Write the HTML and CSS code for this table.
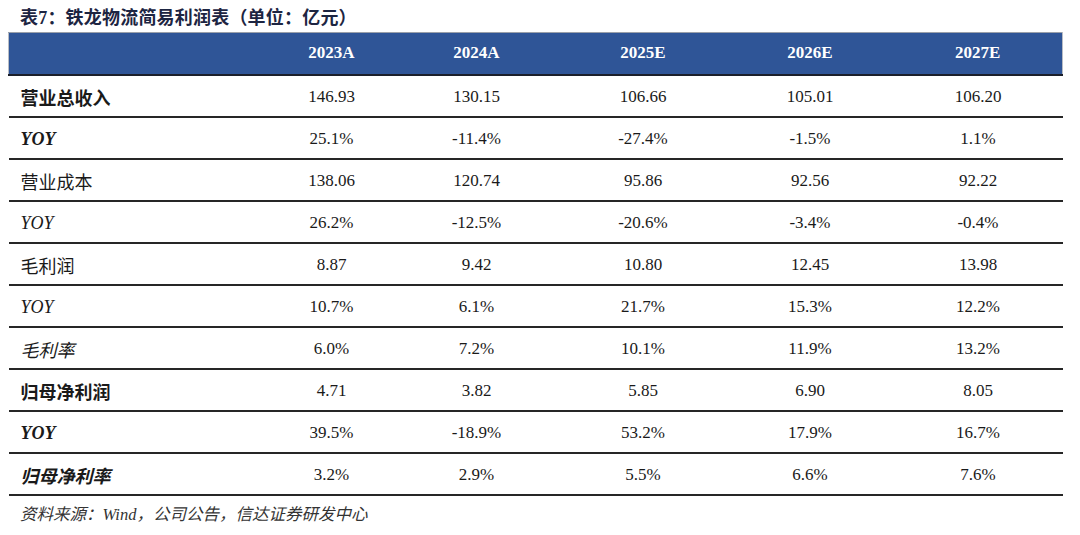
FILE: index.html
```html
<!DOCTYPE html>
<html lang="zh-CN">
<head>
<meta charset="utf-8">
<link rel="stylesheet" href="styles.css">
</head>
<body>
<div class="page">
  <div class="title">表7：铁龙物流简易利润表（单位：亿元）</div>
  <table class="fin">
    <colgroup>
      <col class="c-label"><col class="c1"><col class="c2"><col class="c3"><col class="c4"><col class="c5">
    </colgroup>
    <thead>
      <tr><th></th><th>2023A</th><th>2024A</th><th>2025E</th><th>2026E</th><th>2027E</th></tr>
    </thead>
    <tbody>
      <tr><td class="lbl b">营业总收入</td><td>146.93</td><td>130.15</td><td>106.66</td><td>105.01</td><td>106.20</td></tr>
      <tr><td class="lbl b i">YOY</td><td>25.1%</td><td>-11.4%</td><td>-27.4%</td><td>-1.5%</td><td>1.1%</td></tr>
      <tr><td class="lbl">营业成本</td><td>138.06</td><td>120.74</td><td>95.86</td><td>92.56</td><td>92.22</td></tr>
      <tr><td class="lbl i">YOY</td><td>26.2%</td><td>-12.5%</td><td>-20.6%</td><td>-3.4%</td><td>-0.4%</td></tr>
      <tr><td class="lbl">毛利润</td><td>8.87</td><td>9.42</td><td>10.80</td><td>12.45</td><td>13.98</td></tr>
      <tr><td class="lbl i">YOY</td><td>10.7%</td><td>6.1%</td><td>21.7%</td><td>15.3%</td><td>12.2%</td></tr>
      <tr><td class="lbl i">毛利率</td><td>6.0%</td><td>7.2%</td><td>10.1%</td><td>11.9%</td><td>13.2%</td></tr>
      <tr><td class="lbl b">归母净利润</td><td>4.71</td><td>3.82</td><td>5.85</td><td>6.90</td><td>8.05</td></tr>
      <tr><td class="lbl b i">YOY</td><td>39.5%</td><td>-18.9%</td><td>53.2%</td><td>17.9%</td><td>16.7%</td></tr>
      <tr><td class="lbl b i">归母净利率</td><td>3.2%</td><td>2.9%</td><td>5.5%</td><td>6.6%</td><td>7.6%</td></tr>
    </tbody>
  </table>
  <div class="source">资料来源：Wind，公司公告，信达证券研发中心</div>
</div>
</body>
</html>
```

FILE: styles.css
```css
html, body {
  margin: 0;
  padding: 0;
  background: #ffffff;
}
.page {
  width: 1080px;
  height: 535px;
  padding: 0 0 0 8px;
  box-sizing: border-box;
  font-family: "Liberation Serif", "Noto Sans CJK SC", serif;
  color: #1a1a1a;
}
.title {
  height: 32px;
  line-height: 36px;
  padding-left: 12px;
  font-family: "Liberation Serif", "Noto Sans CJK SC", serif;
  font-weight: bold;
  font-size: 18px;
  color: #1d2542;
  letter-spacing: 0.2px;
}
.fin {
  width: 1054px;
  border-collapse: collapse;
  table-layout: fixed;
}
.c-label { width: 261px; }
.c1 { width: 124px; }
.c2 { width: 166px; }
.c3 { width: 167px; }
.c4 { width: 167px; }
.c5 { width: 169px; }
.fin thead th {
  height: 42px;
  padding: 0;
  background: #2f5597;
  color: #ffffff;
  font-weight: bold;
  font-size: 17px;
  text-align: center;
  border-top: 1px solid #9aa0aa;
  border-bottom: 2px solid #1b1f2a;
  box-sizing: border-box;
}
.fin thead th:first-child { border-left: 1px solid #b8bcc4; }
.fin thead th:last-child { border-right: 1px solid #b8bcc4; }
.fin tbody td {
  height: 42px;
  padding: 3px 0 0 0;
  font-size: 17px;
  text-align: center;
  vertical-align: middle;
  border-bottom: 2px solid #262626;
  box-sizing: border-box;
}
.fin tbody td.lbl {
  text-align: left;
  padding-left: 12px;
  font-size: 18px;
  font-family: "Liberation Serif", "Noto Sans CJK SC", serif;
}
.b { font-weight: bold; }
.i { font-style: italic; }
.source {
  padding-left: 12px;
  margin-top: 5px;
  font-size: 16.5px;
  font-style: italic;
  color: #333333;
  font-family: "Liberation Serif", "Noto Sans CJK SC", serif;
}
```
